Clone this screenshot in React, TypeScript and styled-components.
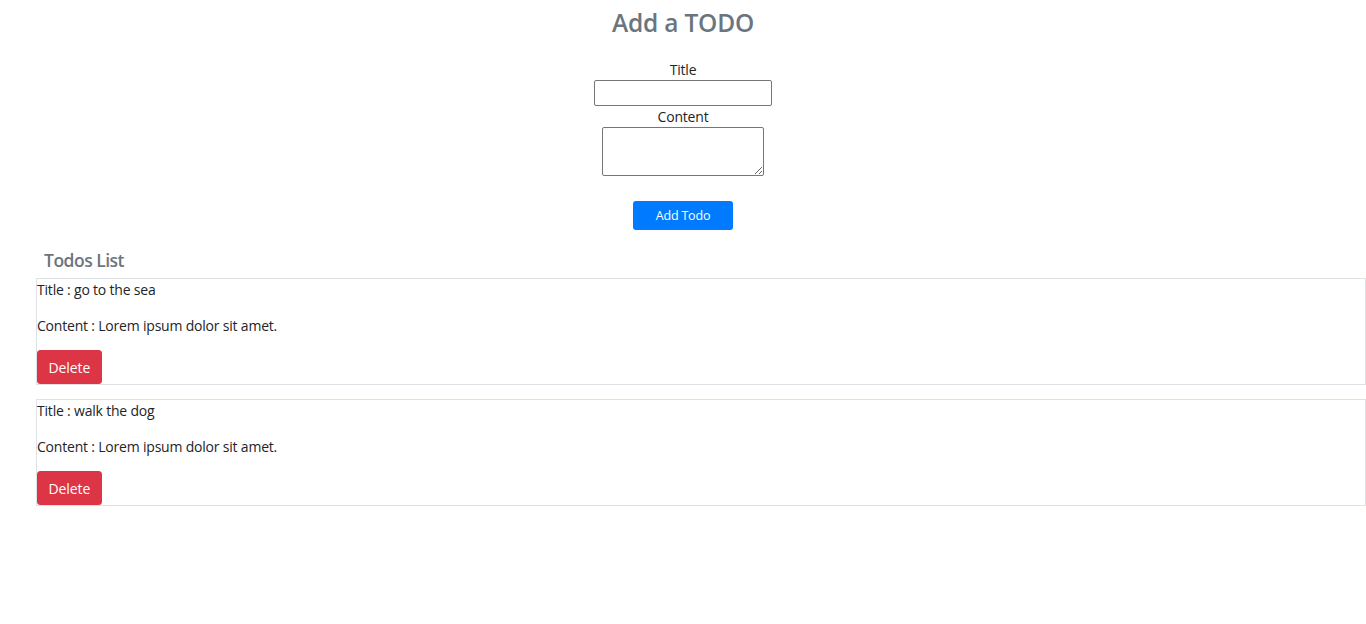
import React, { useState } from "react";
import styled, { createGlobalStyle } from "styled-components";

const GlobalStyle = createGlobalStyle`
  body {
    margin: 0;
    font-family: "Open Sans", "Noto Sans", sans-serif;
    font-size: 14px;
    line-height: 1.5;
    color: #212529;
    background: #fff;
  }
  * { box-sizing: border-box; }
`;

const Page = styled.div`
  padding-top: 8px;
`;

const Heading = styled.h3`
  margin: 0;
  text-align: center;
  font-size: 24.5px;
  line-height: 29px;
  font-weight: 600;
  color: #6c757d;
  letter-spacing: -0.2px;
`;

const Form = styled.form`
  display: flex;
  flex-direction: column;
  align-items: center;
  padding-top: 22px;
`;

const Label = styled.label`
  display: block;
  font-size: 14px;
  line-height: 21px;
  letter-spacing: -0.2px;
`;

const Input = styled.input`
  width: 178px;
  height: 26px;
  border: 1px solid #767676;
  border-radius: 2px;
  font: inherit;
`;

const TextArea = styled.textarea`
  width: 162px;
  height: 49px;
  border: 1px solid #767676;
  border-radius: 2px;
  font: inherit;
  resize: both;
`;

const AddButton = styled.button`
  margin-top: 25px;
  width: 100px;
  height: 29px;
  border: none;
  border-radius: 3px;
  background: #007bff;
  color: #fff;
  font-family: inherit;
  font-size: 12.5px;
  letter-spacing: -0.2px;
  cursor: pointer;
`;

const ListSection = styled.section`
  padding: 0 0 0 36px;
  margin-top: 20px;
`;

const ListTitle = styled.h5`
  margin: 0 0 7px 8px;
  font-size: 17.5px;
  line-height: 21px;
  font-weight: 600;
  color: #6c757d;
  letter-spacing: -0.5px;
`;

const TodoCard = styled.div`
  border: 1px solid #dee2e6;
  margin-bottom: 14px;
`;

const Text = styled.p<{ $gap: number }>`
  margin: 0 0 ${(p) => p.$gap}px;
  line-height: 22px;
  letter-spacing: -0.2px;
`;

const DeleteButton = styled.button`
  display: block;
  height: 34px;
  padding: 0 11.5px;
  border: none;
  border-radius: 3.5px;
  background: #dc3545;
  color: #fff;
  font-family: inherit;
  font-size: 14px;
  letter-spacing: -0.1px;
  cursor: pointer;
`;

type Todo = { id: number; title: string; content: string };

export default function App() {
  const [todos, setTodos] = useState<Todo[]>([
    { id: 1, title: "go to the sea", content: "Lorem ipsum dolor sit amet." },
    { id: 2, title: "walk the dog", content: "Lorem ipsum dolor sit amet." },
  ]);

  return (
    <Page>
      <GlobalStyle />
      <Heading>Add a TODO</Heading>
      <Form onSubmit={(e) => e.preventDefault()}>
        <Label>Title</Label>
        <Input type="text" />
        <Label>Content</Label>
        <TextArea />
        <AddButton type="submit">Add Todo</AddButton>
      </Form>
      <ListSection>
        <ListTitle>Todos List</ListTitle>
        {todos.map((todo) => (
          <TodoCard key={todo.id}>
            <Text $gap={14}>Title : {todo.title}</Text>
            <Text $gap={13}>Content : {todo.content}</Text>
            <DeleteButton onClick={() => setTodos(todos.filter((t) => t.id !== todo.id))}>
              Delete
            </DeleteButton>
          </TodoCard>
        ))}
      </ListSection>
    </Page>
  );
}
